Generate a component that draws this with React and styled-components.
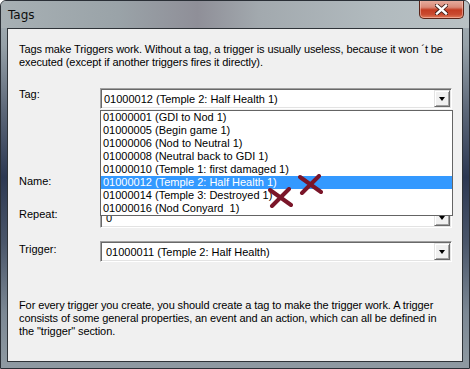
import React from "react";
import styled, { createGlobalStyle } from "styled-components";

const GlobalStyle = createGlobalStyle`
  html, body {
    margin: 0;
    padding: 0;
    background: #ffffff;
  }
  #root {
    width: 470px;
    height: 369px;
  }
`;

// Window frame (Aero glass look)
const Frame = styled.div`
  position: relative;
  width: 470px;
  height: 369px;
  box-sizing: border-box;
  display: flex;
  flex-direction: column;
  border: 1px solid #2a2f36;
  border-radius: 6px 6px 0 0;
  background: linear-gradient(
    to bottom,
    #a9b3b8 0%,
    #96a1a8 12%,
    #5c6778 30%,
    #2c3852 48%,
    #4a566a 66%,
    #7c8894 85%,
    #8f9aa2 100%
  );
  overflow: hidden;
`;

const TitleBar = styled.div`
  height: 27px;
  flex-shrink: 0;
  display: flex;
  align-items: flex-start;
  justify-content: space-between;
  padding-left: 7px;
  background: linear-gradient(
    to right,
    #a7b0b4 0%,
    #9aa3a8 25%,
    #8f8f98 42%,
    #a2a9ae 55%,
    #b1babe 80%,
    #b9c1c4 100%
  );
`;

const Title = styled.span`
  font-family: "DejaVu Sans", "Noto Sans", sans-serif;
  font-size: 12px;
  color: #0e0e0e;
  line-height: 28px;
`;

const CloseButton = styled.div`
  width: 45px;
  height: 19px;
  margin-top: -1px;
  margin-right: 5px;
  box-sizing: border-box;
  border: 1px solid #5a2418;
  border-top: none;
  border-radius: 0 0 5px 5px;
  display: flex;
  align-items: center;
  justify-content: center;
  background: linear-gradient(
    to bottom,
    #e8b0a2 0%,
    #d98a78 40%,
    #c43c22 55%,
    #c94a30 80%,
    #e07a58 100%
  );
  box-shadow: inset 0 0 0 1px rgba(255, 210, 200, 0.5);
`;

const Client = styled.div`
  flex: 1;
  margin: 0 6px 6px 6px;
  border: 1px solid #2e3338;
  background: #f0f0f0;
  position: relative;
  padding: 14px 11px 0 11px;
  font-family: "Liberation Sans", Arial, sans-serif;
  font-size: 11px;
  color: #000;
`;

const Note = styled.p`
  margin: 0;
  line-height: 13px;
  letter-spacing: -0.1px;
`;

const Rows = styled.div`
  display: flex;
  flex-direction: column;
  margin-top: 19px;
`;

const Row = styled.div`
  display: grid;
  grid-template-columns: 81px 352px;
  align-items: start;
  margin-top: ${(p) => p.$gap || 0}px;
`;

const Label = styled.span`
  line-height: 13px;
  padding-top: ${(p) => p.$offset || 0}px;
`;

const Combo = styled.div`
  height: 21px;
  box-sizing: border-box;
  border-top: 1px solid #a0a0a0;
  border-left: 1px solid #a0a0a0;
  border-right: 1px solid #ffffff;
  border-bottom: 1px solid #ffffff;
  box-shadow: inset 1px 1px 0 #696969, inset -1px -1px 0 #e3e3e3;
  background: #ffffff;
  display: flex;
  align-items: center;
  padding: 2px 2px 2px 3px;
`;

const ComboText = styled.span`
  flex: 1;
  white-space: nowrap;
  padding-left: ${(p) => p.$indent || 0}px;
`;

const ArrowButton = styled.div`
  width: 16px;
  height: 17px;
  box-sizing: border-box;
  margin-right: -1px;
  background: #f0f0f0;
  border-top: 1px solid #e3e3e3;
  border-left: 1px solid #e3e3e3;
  border-right: 1px solid #696969;
  border-bottom: 1px solid #696969;
  box-shadow: inset 1px 1px 0 #ffffff, inset -1px -1px 0 #a0a0a0;
  display: flex;
  align-items: center;
  justify-content: center;
`;

const Arrow = styled.div`
  width: 0;
  height: 0;
  border-left: 3.5px solid transparent;
  border-right: 3.5px solid transparent;
  border-top: 4px solid #000;
  margin-top: 1px;
`;

// Name field: an edit box, covered by the open list
const Edit = styled(Combo)`
  padding-left: 3px;
`;

const Footer = styled(Note)`
  margin-top: 37px;
`;

// Open dropdown list of the Tag combo
const DropList = styled.div`
  position: absolute;
  left: 92px;
  top: 81px;
  width: 353px;
  box-sizing: border-box;
  border: 1px solid #646464;
  background: #ffffff;
  display: flex;
  flex-direction: column;
`;

const Item = styled.div`
  height: 13px;
  line-height: 13px;
  padding-left: 2px;
  white-space: nowrap;
  background: ${(p) => (p.$selected ? "#3399ff" : "transparent")};
  color: ${(p) => (p.$selected ? "#ffffff" : "#000000")};
`;

const Mark = styled.svg`
  position: absolute;
  left: ${(p) => p.$x}px;
  top: ${(p) => p.$y}px;
`;

const tags = [
  "01000001 (GDI to Nod 1)",
  "01000005 (Begin game 1)",
  "01000006 (Nod to Neutral 1)",
  "01000008 (Neutral back to GDI 1)",
  "01000010 (Temple 1: first damaged 1)",
  "01000012 (Temple 2: Half Health 1)",
  "01000014 (Temple 3: Destroyed 1)",
  "01000016 (Nod Conyard\u00a0 1)",
];

const ComboBox = ({ value, indent }) => (
  <Combo>
    <ComboText $indent={indent}>{value}</ComboText>
    <ArrowButton>
      <Arrow />
    </ArrowButton>
  </Combo>
);

const Cross = ({ x, y }) => (
  <Mark $x={x} $y={y} width="27" height="21" viewBox="0 0 27 21">
    <path
      d="M3 3 L24 18 M22 2 L5 19"
      stroke="#7a1529"
      strokeWidth="4"
      strokeLinecap="round"
      fill="none"
    />
  </Mark>
);

export default function App() {
  const selected = "01000012 (Temple 2: Half Health 1)";
  return (
    <>
      <GlobalStyle />
      <Frame>
        <TitleBar>
          <Title>Tags</Title>
          <CloseButton>
            <svg width="13" height="11" viewBox="0 0 13 11">
              <path
                d="M2 1.5 L11 9.5 M11 1.5 L2 9.5"
                stroke="#3a1a14"
                strokeWidth="4"
                strokeLinecap="square"
                fill="none"
              />
              <path
                d="M2 1.5 L11 9.5 M11 1.5 L2 9.5"
                stroke="#ffffff"
                strokeWidth="2.4"
                strokeLinecap="square"
                fill="none"
              />
            </svg>
          </CloseButton>
        </TitleBar>

        <Client>
          <Note>
            Tags make Triggers work. Without a tag, a trigger is usually
            useless, because it won ´t be executed (except if another triggers
            fires it directly).
          </Note>

          <Rows>
            <Row>
              <Label>Tag:</Label>
              <ComboBox value={selected} />
            </Row>
            <Row $gap={65}>
              <Label $offset={1}>Name:</Label>
              <Edit />
            </Row>
            <Row $gap={12}>
              <Label $offset={1}>Repeat:</Label>
              <ComboBox value="0" indent={2} />
            </Row>
            <Row $gap={13}>
              <Label $offset={2}>Trigger:</Label>
              <ComboBox value="01000011 (Temple 2: Half Health)" indent={2} />
            </Row>
          </Rows>

          <Footer>
            For every trigger you create, you should create a tag to make the
            trigger work. A trigger consists of some general properties, an
            event and an action, which can all be defined in the "trigger"
            section.
          </Footer>

          <DropList>
            {tags.map((t) => (
              <Item key={t} $selected={t === selected}>
                {t}
              </Item>
            ))}
          </DropList>

          <Cross x={289} y={145} />
          <Cross x={259} y={158} />
        </Client>
      </Frame>
    </>
  );
}
